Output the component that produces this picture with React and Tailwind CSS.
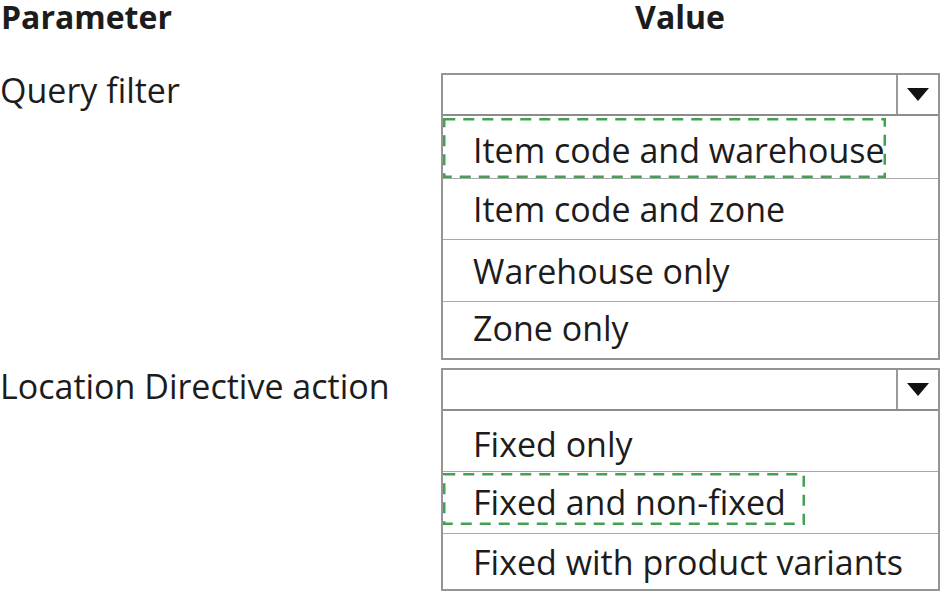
import React from 'react';

const DashedMark = () => (
    <svg className="absolute inset-0 w-full h-full pointer-events-none" preserveAspectRatio="none">
        <rect x="1.25" y="1.25" width="calc(100% - 2.5px)" height="calc(100% - 2.5px)" fill="none" stroke="#44a052" strokeWidth="2.5" strokeDasharray="11 8" />
    </svg>
);

const Arrow = () => (
    <svg width="22" height="13" viewBox="0 0 22 13">
        <path d="M0 0 H22 L11 13 Z" fill="#111" />
    </svg>
);

const Dropdown = ({ options }) => (
    <div className="flex-1 border-2 border-[#959595] mr-[1px]">
        <div className="flex h-[41px] border-b-2 border-[#8c8c8c]">
            <div className="flex-1" />
            <div className="w-[42px] border-l-2 border-[#9a9a9a] flex items-center justify-center">
                <Arrow />
            </div>
        </div>
        {options.map((opt, i) => (
            <div
                key={opt.label}
                className={`flex ${opt.mark ? 'items-start' : 'items-center'} ${opt.h} ${i < options.length - 1 ? 'border-b border-[#a8a8a8]' : ''}`}
            >
                <div className={`relative flex items-center pl-[30px] ${opt.pad || ''} ${opt.mark ? opt.w : ''}`}>
                    {opt.mark && <DashedMark />}
                    <span className="whitespace-nowrap leading-[34px]">{opt.label}</span>
                </div>
            </div>
        ))}
    </div>
);

const queryOptions = [
    { label: 'Item code and warehouse', h: 'h-[63px]', mark: true, w: 'w-[443px] h-[60px] mt-[2px] pt-[4px]' },
    { label: 'Item code and zone', h: 'h-[61px]' },
    { label: 'Warehouse only', h: 'h-[62px]' },
    { label: 'Zone only', h: 'h-[56px]', pad: 'pb-[4px]' },
];

const actionOptions = [
    { label: 'Fixed only', h: 'h-[61px]', pad: 'pt-[6px]' },
    { label: 'Fixed and non-fixed', h: 'h-[62px]', mark: true, w: 'w-[362px] h-[52px] mt-[1px] pt-[6px]' },
    { label: 'Fixed with product variants', h: 'h-[55px]' },
];

export default function App() {
    return (
        <div className="w-[941px] h-[594px] bg-white text-[#1c1c1c] font-['Open_Sans',sans-serif] text-[34px] overflow-hidden">
            <div className="flex h-[73px] font-bold text-[32px] leading-[34px]">
                <div className="w-[441px] pl-[1px]">Parameter</div>
                <div className="flex-1 text-center pr-[22px]">Value</div>
            </div>
            <div className="flex">
                <div className="w-[441px] leading-[34px]">Query filter</div>
                <Dropdown options={queryOptions} />
            </div>
            <div className="flex mt-[8px]">
                <div className="w-[441px] leading-[34px] pt-[1px]">Location Directive action</div>
                <Dropdown options={actionOptions} />
            </div>
        </div>
    );
}
